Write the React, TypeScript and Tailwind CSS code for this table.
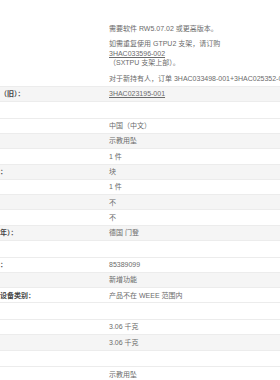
import React from "react";

/* TYPES */
interface SpecRow {
  label?: string;
  value: React.ReactNode;
}

type Block = { kind: "heading" } | { kind: "rows"; rows: SpecRow[] };

const Link: React.FC<{ children: React.ReactNode }> = ({ children }) => (
  <a href="#" className="underline decoration-[0.5px] underline-offset-[1px] text-[#6b6b6b]">
    {children}
  </a>
);

const blocks: Block[] = [
  {
    kind: "rows",
    rows: [
      {
        value: (
          <div className="pt-[21px] space-y-[6.7px]">
            <p>需要软件 RW5.07.02 或更高版本。</p>
            <p>
              如需重复使用 GTPU2 支架，请订购
              <br />
              <Link>3HAC033596-002</Link>
              <br />
              （SXTPU 支架上部）。
            </p>
            <p className="whitespace-nowrap">
              对于新持有人，订单 3HAC033498-001+3HAC025352-001。
            </p>
          </div>
        ),
      },
      { label: "（旧）：", value: <Link>3HAC023195-001</Link> },
    ],
  },
  { kind: "heading" },
  {
    kind: "rows",
    rows: [
      { value: "中国（中文）" },
      { value: "示教用坠" },
      { value: "1 件" },
      { label: "：", value: "块" },
      { value: "1 件" },
      { value: "不" },
      { value: "不" },
      { label: "年）：", value: "德国 门登" },
    ],
  },
  { kind: "heading" },
  {
    kind: "rows",
    rows: [
      { label: "：", value: "85389099" },
      { value: "新增功能" },
      { label: "设备类别：", value: "产品不在 WEEE 范围内" },
    ],
  },
  { kind: "heading" },
  {
    kind: "rows",
    rows: [{ value: "3.06 千克" }, { value: "3.06 千克" }],
  },
  { kind: "heading" },
  { kind: "rows", rows: [{ value: "示教用坠" }] },
];

const App: React.FC = () => {
  return (
    <div
      className="w-[280px] h-[380px] overflow-hidden bg-white text-[7px] leading-[9.3px] text-[#6b6b6b]"
      style={{ fontFamily: '"Liberation Sans", "Noto Sans CJK SC", sans-serif' }}
    >
      {blocks.map((block, bi) =>
        block.kind === "heading" ? (
          <div key={bi} className="h-[16.5px] border-b border-[#ececec]" />
        ) : (
          block.rows.map((row, ri) => (
            <div
              key={`${bi}-${ri}`}
              className={`flex py-[2.5px] border-b border-[#ececec] ${
                ri % 2 === 1 ? "bg-[#f5f5f5]" : "bg-white"
              }`}
            >
              {/* LABEL */}
              <div className="w-[109px] shrink-0 font-bold text-[#444] whitespace-nowrap">
                {row.label}
              </div>

              {/* VALUE */}
              <div className="flex-1 min-w-0">{row.value}</div>
            </div>
          ))
        )
      )}
    </div>
  );
};

export default App;
